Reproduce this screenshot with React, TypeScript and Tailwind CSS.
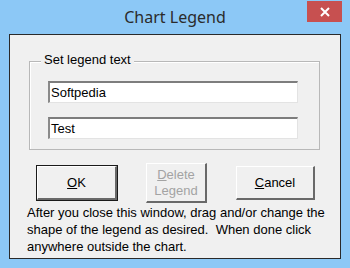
import React from 'react';

const bodyFont = { fontFamily: '"Liberation Sans", Arial, sans-serif' };

function TextBox({ value }: { value: string }) {
  return (
    <div className="h-[22px] w-[250px] border-t-2 border-l-2 border-b border-r border-t-[#7d7d7d] border-l-[#8a8a8a] border-b-[#e3e3e3] border-r-[#e3e3e3] bg-white pl-[1px] text-[13px] leading-[19px] text-black">
      {value}
    </div>
  );
}

function Button({
  children,
  isDefault,
  disabled,
  className,
}: {
  children: React.ReactNode;
  isDefault?: boolean;
  disabled?: boolean;
  className?: string;
}) {
  return (
    <div
      className={
        'flex items-center justify-center text-center text-[13px] leading-[16px] ' +
        (isDefault ? 'border border-[#1a1a1a] ' : 'border border-transparent ') +
        (disabled ? 'text-[#a3a3a3] ' : 'text-black ') +
        (className ?? '')
      }
    >
      <div className="flex h-full w-full items-center justify-center border-t border-l border-b-2 border-r-2 border-t-white border-l-white border-b-[#696969] border-r-[#696969] bg-[#f0f0f0]">
        {children}
      </div>
    </div>
  );
}

export default function App() {
  return (
    <div className="flex h-[268px] w-[350px] flex-col bg-[#8cc8f6]" style={bodyFont}>
      <div className="relative flex h-[34px] shrink-0 items-center justify-center pb-[1px]">
        <span
          className="text-[16px] text-[#2b2b2b]"
          style={{ fontFamily: '"Noto Sans", "Open Sans", sans-serif' }}
        >
          Chart Legend
        </span>
        <div className="absolute right-[8px] top-[1px] flex h-[21px] w-[35px] items-center justify-center bg-[#c75050]">
          <svg width="10" height="10" viewBox="0 0 10 10">
            <path d="M1 1 L9 9 M9 1 L1 9" stroke="white" strokeWidth="2" />
          </svg>
        </div>
      </div>
      <div className="mx-[9px] mb-[9px] flex flex-1 flex-col border border-[#2a2a2a] bg-[#f0f0f0]">
        <div className="relative ml-[19px] mr-[20px] mt-[26px] h-[89px] border border-[#b8b8b8] shadow-[inset_1px_1px_0_#ffffff]">
          <span className="absolute left-[11px] top-[-10px] bg-[#f0f0f0] px-[3px] text-[13px] leading-[16px] text-black">
            Set legend text
          </span>
          <div className="ml-[18px] mt-[19px] flex flex-col gap-[14px]">
            <TextBox value="Softpedia" />
            <TextBox value="Test" />
          </div>
        </div>
        <div className="ml-[26px] mt-[12px] flex items-center gap-[27px]">
          <Button isDefault className="h-[36px] w-[82px]">
            <span>
              <span className="underline">O</span>K
            </span>
          </Button>
          <Button disabled className="h-[42px] w-[63px]">
            <span>
              <span className="underline">D</span>elete
              <br />
              Legend
            </span>
          </Button>
          <Button className="h-[36px] w-[81px]">
            <span>
              <span className="underline">C</span>ancel
            </span>
          </Button>
        </div>
        <p className="ml-[17px] mt-[0px] text-[13px] leading-[17px] text-black">
          After you close this window, drag and/or change the
          <br />
          shape of the legend as desired.&nbsp; When done click
          <br />
          anywhere outside the chart.
        </p>
      </div>
    </div>
  );
}
